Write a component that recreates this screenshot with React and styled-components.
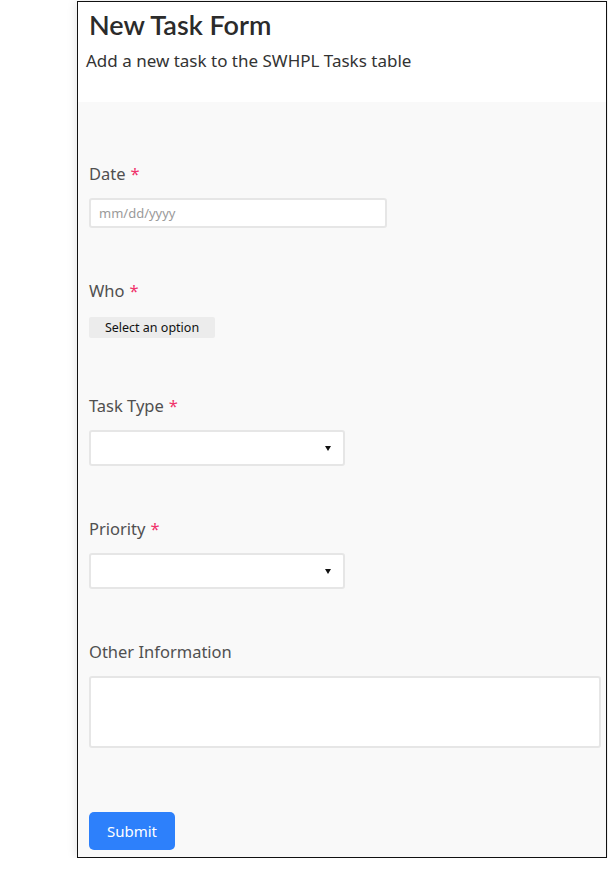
import React from "react";
import styled, { createGlobalStyle } from "styled-components";

const GlobalStyle = createGlobalStyle`
  html, body {
    margin: 0;
    padding: 0;
    background: #ffffff;
  }
  body {
    font-family: "Noto Sans", "Open Sans", sans-serif;
  }
  * {
    box-sizing: border-box;
  }
`;

const Panel = styled.div`
  width: 530px;
  height: 857px;
  margin: 1px 0 0 77px;
  border: 1px solid #111;
  background: #f9f9f9;
  box-shadow: 0 0 10px rgba(0, 0, 0, 0.12);
  display: flex;
  flex-direction: column;
`;

const Header = styled.header`
  background: #ffffff;
  height: 100px;
  padding: 5px 11px 0 8px;
`;

const Title = styled.h1`
  margin: 0 0 0 3px;
  font-family: "Lato", sans-serif;
  font-weight: 600;
  font-size: 27px;
  line-height: 36px;
  color: #2b2b2b;
`;

const Subtitle = styled.p`
  margin: 6px 0 0;
  font-size: 17px;
  line-height: 24px;
  color: #333;
`;

const Body = styled.form`
  flex: 1;
  padding: 0 11px;
  display: flex;
  flex-direction: column;
`;

const Field = styled.div`
  margin-top: ${(p) => p.$top}px;
  display: flex;
  flex-direction: column;
  align-items: flex-start;
`;

const Label = styled.label`
  font-size: 16.5px;
  line-height: 24px;
  color: #505050;
`;

const Required = styled.span`
  color: #f0336b;
  margin-left: 5px;
`;

const box = `
  background: #fff;
  border: 2px solid #e6e6e6;
  border-radius: 3px;
  margin-top: 12px;
`;

const DateInput = styled.div`
  ${box}
  width: 298px;
  height: 30px;
  padding: 0 8px;
  display: flex;
  align-items: center;
  font-size: 13px;
  color: #9a9a9a;
`;

const OptionButton = styled.button`
  margin-top: 14px;
  width: 126px;
  height: 21px;
  border: none;
  border-radius: 2px;
  background: #ececec;
  font-family: "Noto Sans", sans-serif;
  font-size: 12.5px;
  color: #111;
  padding: 0;
`;

const Select = styled.div`
  ${box}
  width: 256px;
  height: 36px;
  display: flex;
  align-items: center;
  justify-content: flex-end;
  padding-right: 12px;
`;

const Caret = styled.span`
  width: 0;
  height: 0;
  border-left: 3.5px solid transparent;
  border-right: 3.5px solid transparent;
  border-top: 5px solid #111;
`;

const TextArea = styled.div`
  ${box}
  width: 512px;
  height: 72px;
`;

const Submit = styled.button`
  margin-top: 64px;
  align-self: flex-start;
  width: 86px;
  height: 38px;
  border: none;
  border-radius: 5px;
  background: #2d80fb;
  color: #fff;
  font-family: "Noto Sans", sans-serif;
  font-size: 15px;
  padding: 0;
`;

const Req = ({ children }) => (
  <Label>
    {children}
    <Required>*</Required>
  </Label>
);

export default function App() {
  return (
    <>
      <GlobalStyle />
      <Panel>
        <Header>
          <Title>New Task Form</Title>
          <Subtitle>Add a new task to the SWHPL Tasks table</Subtitle>
        </Header>
        <Body onSubmit={(e) => e.preventDefault()}>
          <Field $top={60}>
            <Req>Date</Req>
            <DateInput>mm/dd/yyyy</DateInput>
          </Field>
          <Field $top={51}>
            <Req>Who</Req>
            <OptionButton type="button">Select an option</OptionButton>
          </Field>
          <Field $top={56}>
            <Req>Task Type</Req>
            <Select>
              <Caret />
            </Select>
          </Field>
          <Field $top={51}>
            <Req>Priority</Req>
            <Select>
              <Caret />
            </Select>
          </Field>
          <Field $top={51}>
            <Label>Other Information</Label>
            <TextArea />
          </Field>
          <Submit type="submit">Submit</Submit>
        </Body>
      </Panel>
    </>
  );
}
